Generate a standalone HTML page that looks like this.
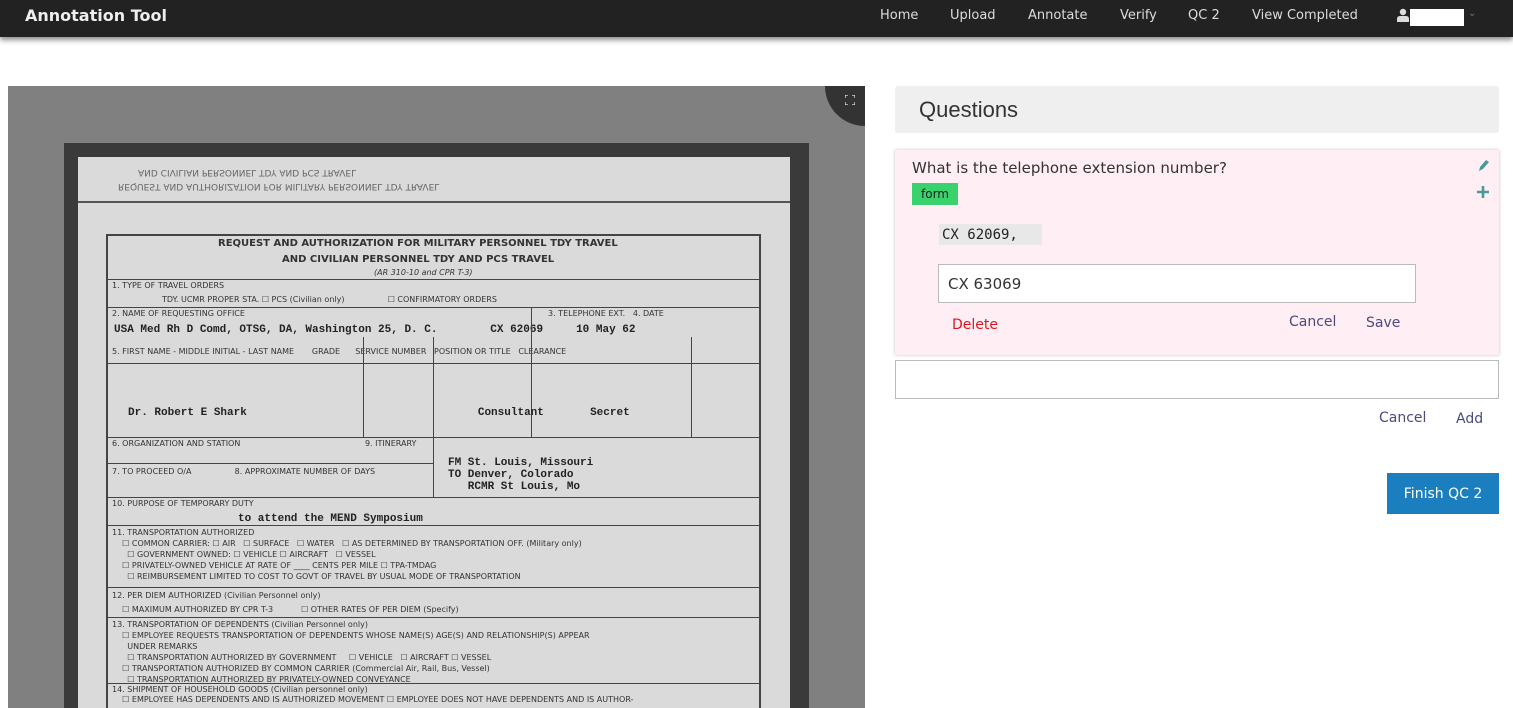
<!DOCTYPE html>
<html><head><meta charset="utf-8"><style>
*{box-sizing:border-box;margin:0;padding:0}
html{width:1513px;height:708px;overflow:hidden}
body{width:1513px;height:708px;overflow:hidden;background:#fff;font-family:"DejaVu Sans","Liberation Sans",sans-serif;position:relative}
.nav{position:absolute;left:0;top:0;width:1513px;height:37px;background:#222;box-shadow:0 3px 5px rgba(0,0,0,.45)}
.nav .brand{position:absolute;left:25px;top:6px;color:#eee;font-weight:bold;font-size:16px}
.nav a{position:absolute;top:8px;color:#ddd;font-size:13px}
.a{position:absolute}
.viewer{left:8px;top:86px;width:857px;height:622px;background:#808080;overflow:hidden}
.doc{left:56px;top:57px;width:745px;height:565px;background:#3a3a3a;overflow:hidden}
.paper{left:14px;top:14px;width:712px;height:600px;background:#dadada}
.dt{position:absolute;font-size:9px;color:#333;white-space:nowrap}
.hl{position:absolute;height:1px;background:#444}
.vl{position:absolute;width:1px;background:#444}
</style></head><body>
<div class="nav"><div class="brand">Annotation Tool</div>
<a style="left:880px">Home</a><a style="left:950px">Upload</a><a style="left:1028px">Annotate</a><a style="left:1120px">Verify</a><a style="left:1188px">QC 2</a><a style="left:1252px">View Completed</a>
<svg class="a" style="left:1397px;top:8px" width="12" height="14" viewBox="0 0 12 14"><circle cx="6" cy="4" r="3.2" fill="#ddd"/><path d="M0 14v-3q0-3 3-3h6q3 0 3 3v3z" fill="#ddd"/></svg>
<div class="a" style="left:1410px;top:9px;width:54px;height:17px;background:#fff"></div>
<span class="a" style="left:1468px;top:8px;color:#777;font-size:10px">⌄</span>
</div>

<div class="a viewer">
 <div class="a doc"><div class="a paper">
  <div class="dt" style="left:60px;top:10px;transform:scaleY(-1);color:#666">AND CIVILIAN PERSONNEL TDY AND PCS TRAVEL</div>
  <div class="dt" style="left:40px;top:24px;transform:scaleY(-1);color:#666">REQUEST AND AUTHORIZATION FOR MILITARY PERSONNEL TDY TRAVEL</div>
  <div class="hl" style="left:0;top:44px;width:712px;background:#555;height:2px"></div>
  <div class="a" style="left:28px;top:77px;width:655px;height:530px;border:2px solid #444"></div>
  <div class="dt" style="left:140px;top:81px;font-weight:bold;font-size:10px">REQUEST AND AUTHORIZATION FOR MILITARY PERSONNEL TDY TRAVEL</div>
  <div class="dt" style="left:204px;top:97px;font-weight:bold;font-size:10px">AND CIVILIAN PERSONNEL TDY AND PCS TRAVEL</div>
  <div class="dt" style="left:296px;top:111px;font-style:italic;font-size:8px">(AR 310-10 and CPR T-3)</div>
  <div class="hl" style="left:28px;top:122px;width:655px"></div>
  <div class="dt" style="left:34px;top:124px;font-size:8px">1. TYPE OF TRAVEL ORDERS</div>
  <div class="dt" style="left:84px;top:138px;font-size:8px">TDY. UCMR PROPER STA. ☐ PCS (Civilian only) &nbsp; &nbsp; &nbsp; &nbsp; &nbsp; &nbsp; &nbsp; &nbsp; ☐ CONFIRMATORY ORDERS</div>
  <div class="hl" style="left:28px;top:150px;width:655px"></div>
  <div class="dt" style="left:34px;top:152px;font-size:8px">2. NAME OF REQUESTING OFFICE</div>
  <div class="dt" style="left:470px;top:152px;font-size:8px">3. TELEPHONE EXT. &nbsp; 4. DATE</div>
  <div class="dt" style="left:36px;top:167px;font-family:'Liberation Mono';font-weight:bold;font-size:11px;color:#222">USA Med Rh D Comd, OTSG, DA, Washington 25, D. C. &nbsp; &nbsp; &nbsp; &nbsp;CX 62069 &nbsp; &nbsp; 10 May 62</div>
  <div class="dt" style="left:34px;top:190px;font-size:8px">5. FIRST NAME - MIDDLE INITIAL - LAST NAME &nbsp; &nbsp; &nbsp; GRADE &nbsp; &nbsp; &nbsp;SERVICE NUMBER &nbsp; POSITION OR TITLE &nbsp; CLEARANCE</div>
  <div class="hl" style="left:28px;top:206px;width:655px"></div>
  <div class="vl" style="left:285px;top:180px;height:100px"></div><div class="vl" style="left:355px;top:180px;height:100px"></div>
  <div class="vl" style="left:453px;top:150px;height:130px"></div><div class="vl" style="left:613px;top:180px;height:100px"></div>
  <div class="dt" style="left:50px;top:250px;font-family:'Liberation Mono';font-weight:bold;font-size:11px;color:#222">Dr. Robert E Shark &nbsp; &nbsp; &nbsp; &nbsp; &nbsp; &nbsp; &nbsp; &nbsp; &nbsp; &nbsp; &nbsp; &nbsp; &nbsp; &nbsp; &nbsp; &nbsp; &nbsp; Consultant &nbsp; &nbsp; &nbsp; Secret</div>
  <div class="hl" style="left:28px;top:280px;width:655px"></div>
  <div class="dt" style="left:34px;top:282px;font-size:8px">6. ORGANIZATION AND STATION &nbsp; &nbsp; &nbsp; &nbsp; &nbsp; &nbsp; &nbsp; &nbsp; &nbsp; &nbsp; &nbsp; &nbsp; &nbsp; &nbsp; &nbsp; &nbsp; &nbsp; &nbsp; &nbsp; &nbsp; &nbsp; &nbsp; &nbsp; &nbsp; 9. ITINERARY</div>
  <div class="dt" style="left:370px;top:300px;font-family:'Liberation Mono';font-weight:bold;font-size:11px;color:#222">FM St. Louis, Missouri<br>TO Denver, Colorado<br>&nbsp; &nbsp;RCMR St Louis, Mo</div>
  <div class="vl" style="left:355px;top:280px;height:60px"></div>
  <div class="hl" style="left:28px;top:306px;width:327px"></div>
  <div class="dt" style="left:34px;top:310px;font-size:8px">7. TO PROCEED O/A &nbsp; &nbsp; &nbsp; &nbsp; &nbsp; &nbsp; &nbsp; &nbsp; 8. APPROXIMATE NUMBER OF DAYS</div>
  <div class="hl" style="left:28px;top:340px;width:655px"></div>
  <div class="dt" style="left:34px;top:342px;font-size:8px">10. PURPOSE OF TEMPORARY DUTY</div>
  <div class="dt" style="left:160px;top:356px;font-family:'Liberation Mono';font-weight:bold;font-size:11px;color:#222">to attend the MEND Symposium</div>
  <div class="hl" style="left:28px;top:368px;width:655px"></div>
  <div class="dt" style="left:34px;top:370px;font-size:8px;line-height:11px">11. TRANSPORTATION AUTHORIZED<br>&nbsp; &nbsp; ☐ COMMON CARRIER: ☐ AIR &nbsp; ☐ SURFACE &nbsp; ☐ WATER &nbsp; ☐ AS DETERMINED BY TRANSPORTATION OFF. (Military only)<br>&nbsp; &nbsp; &nbsp; ☐ GOVERNMENT OWNED: ☐ VEHICLE ☐ AIRCRAFT &nbsp; ☐ VESSEL<br>&nbsp; &nbsp; ☐ PRIVATELY-OWNED VEHICLE AT RATE OF ____ CENTS PER MILE ☐ TPA-TMDAG<br>&nbsp; &nbsp; &nbsp; ☐ REIMBURSEMENT LIMITED TO COST TO GOVT OF TRAVEL BY USUAL MODE OF TRANSPORTATION</div>
  <div class="hl" style="left:28px;top:430px;width:655px"></div>
  <div class="dt" style="left:34px;top:432px;font-size:8px;line-height:14px">12. PER DIEM AUTHORIZED (Civilian Personnel only)<br>&nbsp; &nbsp; ☐ MAXIMUM AUTHORIZED BY CPR T-3 &nbsp; &nbsp; &nbsp; &nbsp; &nbsp; ☐ OTHER RATES OF PER DIEM (Specify)</div>
  <div class="hl" style="left:28px;top:460px;width:655px"></div>
  <div class="dt" style="left:34px;top:462px;font-size:8px;line-height:11px">13. TRANSPORTATION OF DEPENDENTS (Civilian Personnel only)<br>&nbsp; &nbsp; ☐ EMPLOYEE REQUESTS TRANSPORTATION OF DEPENDENTS WHOSE NAME(S) AGE(S) AND RELATIONSHIP(S) APPEAR<br>&nbsp; &nbsp; &nbsp; UNDER REMARKS<br>&nbsp; &nbsp; &nbsp; ☐ TRANSPORTATION AUTHORIZED BY GOVERNMENT &nbsp; &nbsp; ☐ VEHICLE &nbsp; ☐ AIRCRAFT ☐ VESSEL<br>&nbsp; &nbsp; ☐ TRANSPORTATION AUTHORIZED BY COMMON CARRIER (Commercial Air, Rail, Bus, Vessel)<br>&nbsp; &nbsp; &nbsp; ☐ TRANSPORTATION AUTHORIZED BY PRIVATELY-OWNED CONVEYANCE</div>
  <div class="hl" style="left:28px;top:526px;width:655px"></div>
  <div class="dt" style="left:34px;top:528px;font-size:8px;line-height:10px">14. SHIPMENT OF HOUSEHOLD GOODS (Civilian personnel only)<br>&nbsp; &nbsp; ☐ EMPLOYEE HAS DEPENDENTS AND IS AUTHORIZED MOVEMENT ☐ EMPLOYEE DOES NOT HAVE DEPENDENTS AND IS AUTHOR-</div>
 </div></div>
 <div class="a" style="left:817px;top:-40px;width:80px;height:80px;border-radius:50%;background:#333"></div>
 <svg class="a" style="left:837px;top:9px" width="10" height="10" viewBox="0 0 10 10" fill="none" stroke="#eee" stroke-width="1.2"><path d="M0 3V0h3M7 0h3v3M10 7v3H7M3 10H0V7"/></svg>
</div>

<div class="a" style="left:895px;top:86px;width:604px;height:47px;background:#efefef;border-radius:3px"></div>
<div class="a" style="left:919px;top:97px;font-size:22px;color:#333;font-family:'Liberation Sans',sans-serif">Questions</div>

<div class="a" style="left:895px;top:150px;width:604px;height:205px;background:#ffeef3;box-shadow:0 0 3px rgba(0,0,0,.25)"></div>
<div class="a" style="left:912px;top:159px;font-size:15px;color:#333">What is the telephone extension number?</div>
<div class="a" style="left:912px;top:183px;width:46px;height:22px;background:#3ad26c;color:#222;font-size:12px;text-align:center;line-height:22px">form</div>
<svg class="a" style="left:1477px;top:158px" width="13" height="14" viewBox="0 0 13 14"><path d="M2 13l1-4 6-7 3 2-6 7z" fill="#4a9a9a"/></svg>
<svg class="a" style="left:1476px;top:185px" width="14" height="14" viewBox="0 0 14 14"><path d="M7 1v12M1 7h12" stroke="#4a9a9a" stroke-width="2.6"/></svg>
<div class="a" style="left:939px;top:224px;width:103px;height:21px;background:#e8e8e8;font-family:'DejaVu Sans Mono','Liberation Mono',monospace;font-size:14px;line-height:22px;padding-left:3px;color:#222">CX 62069,</div>
<div class="a" style="left:938px;top:264px;width:478px;height:39px;background:#fff;border:1px solid #bbb;font-size:15px;color:#333;line-height:38px;padding-left:9px">CX 63069</div>
<div class="a" style="left:952px;top:317px;font-size:14px;color:#e0141e">Delete</div>
<div class="a" style="left:1289px;top:314px;font-size:14px;color:#4a4a80">Cancel</div>
<div class="a" style="left:1366px;top:315px;font-size:14px;color:#4a4a80">Save</div>

<div class="a" style="left:895px;top:360px;width:604px;height:39px;background:#fff;border:1px solid #bbb"></div>
<div class="a" style="left:1379px;top:410px;font-size:14px;color:#4a4a80">Cancel</div>
<div class="a" style="left:1456px;top:411px;font-size:14px;color:#4a4a80">Add</div>
<div class="a" style="left:1387px;top:473px;width:112px;height:41px;background:#1b7fbf;color:#fff;font-size:14px;text-align:center;line-height:42px">Finish QC 2</div>
</body></html>
